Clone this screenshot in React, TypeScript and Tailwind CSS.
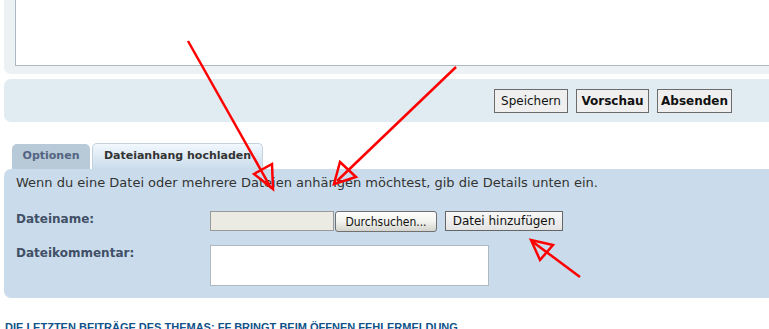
export default function App() {
  return (
    <div className="relative w-[769px] h-[329px] overflow-hidden bg-white font-['DejaVu_Sans',Verdana,sans-serif]">
      {/* top panel with textarea */}
      <div className="ml-[4px] h-[74px] bg-[#ECF1F3] rounded-bl-[7px] pl-[11px] pb-[8px] flex flex-col">
        <div className="flex-1 bg-white border-l border-b border-[#AEB8C0]" />
      </div>

      {/* submit buttons panel */}
      <div className="ml-[4px] mt-[5px] h-[43px] bg-[#E1EBF2] rounded-l-[7px] flex items-start justify-end pt-[10px] pr-[37px] gap-[8px]">
        <button className="w-[74px] h-[24px] border border-[#6b6b6b] bg-[#EFEFEF] text-[12px] text-[#111] font-normal">
          Speichern
        </button>
        <button className="w-[73px] h-[24px] border border-[#6b6b6b] bg-[#EFEFEF] text-[12px] text-[#111] font-bold">
          Vorschau
        </button>
        <button className="w-[75px] h-[24px] border border-[#6b6b6b] bg-[#EFEFEF] text-[12px] text-[#111] font-bold">
          Absenden
        </button>
      </div>

      {/* tabs */}
      <div className="mt-[21px] h-[26px] pl-[12px] flex items-end gap-[2px]">
        <div className="w-[78px] h-[25px] bg-[#B8C9D7] rounded-t-[5px] flex items-center justify-center text-[11px] font-bold text-[#536482]">
          Optionen
        </div>
        <div className="w-[171px] h-[26px] rounded-t-[5px] border border-b-0 border-[#C4D2DE] bg-gradient-to-b from-[#F2F8FE] to-[#CADCEB] flex items-center justify-center text-[11px] font-bold text-[#333]">
          Dateianhang hochladen
        </div>
      </div>

      {/* main panel */}
      <div className="ml-[4px] h-[129px] bg-[#CADCEB] rounded-l-[7px] pl-[12px] pt-[6px]">
        <p className="text-[13px] leading-[16px] text-[#333]">
          Wenn du eine Datei oder mehrere Dateien anhängen möchtest, gib die Details unten ein.
        </p>
        <div className="mt-[20px] flex items-start">
          <div className="w-[194px] text-[12px] leading-[14px] pt-[1px] font-bold text-[#425067]">Dateiname:</div>
          <div className="flex items-start">
            <div className="w-[124px] h-[20px] bg-[#EBEAE3] border border-[#9a9a9a]" />
            <button className="ml-[1px] w-[102px] h-[21px] rounded-[3px] border border-[#707070] bg-gradient-to-b from-[#FEFEFE] via-[#F3F3EF] to-[#D4D4CE] text-[12px] text-[#111] font-['DejaVu_Sans_Condensed','DejaVu_Sans',sans-serif]">
              Durchsuchen...
            </button>
            <button className="ml-[8px] w-[118px] h-[20px] border border-[#666] bg-gradient-to-b from-[#F8F8F8] to-[#E4E4E4] text-[12px] text-[#111]">
              Datei hinzufügen
            </button>
          </div>
        </div>
        <div className="mt-[13px] flex items-start">
          <div className="w-[194px] text-[12px] leading-[14px] pt-[1px] font-bold text-[#425067]">Dateikommentar:</div>
          <div className="w-[279px] h-[41px] bg-white border border-[#B0B8BF]" />
        </div>
      </div>

      {/* heading */}
      <h3 className="mt-[22px] ml-[5px] text-[11px] leading-[14px] font-bold uppercase text-[#105289] font-['Liberation_Sans',Arial,sans-serif] whitespace-nowrap">
        Die letzten Beiträge des Themas: FF bringt beim Öffnen Fehlermeldung
      </h3>

      {/* red annotation arrows */}
      <svg className="absolute inset-0 pointer-events-none" width="769" height="329" viewBox="0 0 769 329">
        <g stroke="#FF0000" strokeWidth="2.5" fill="none" strokeLinejoin="miter">
          <line x1="188" y1="41" x2="271" y2="188" />
          <polygon points="254,174 272,164 273,189" />
          <line x1="456" y1="67" x2="337" y2="181" />
          <polygon points="340,162 356,177 334,184" />
          <line x1="580" y1="277" x2="533" y2="242" />
          <polygon points="553,245 540,260 531,240" />
        </g>
      </svg>
    </div>
  );
}
